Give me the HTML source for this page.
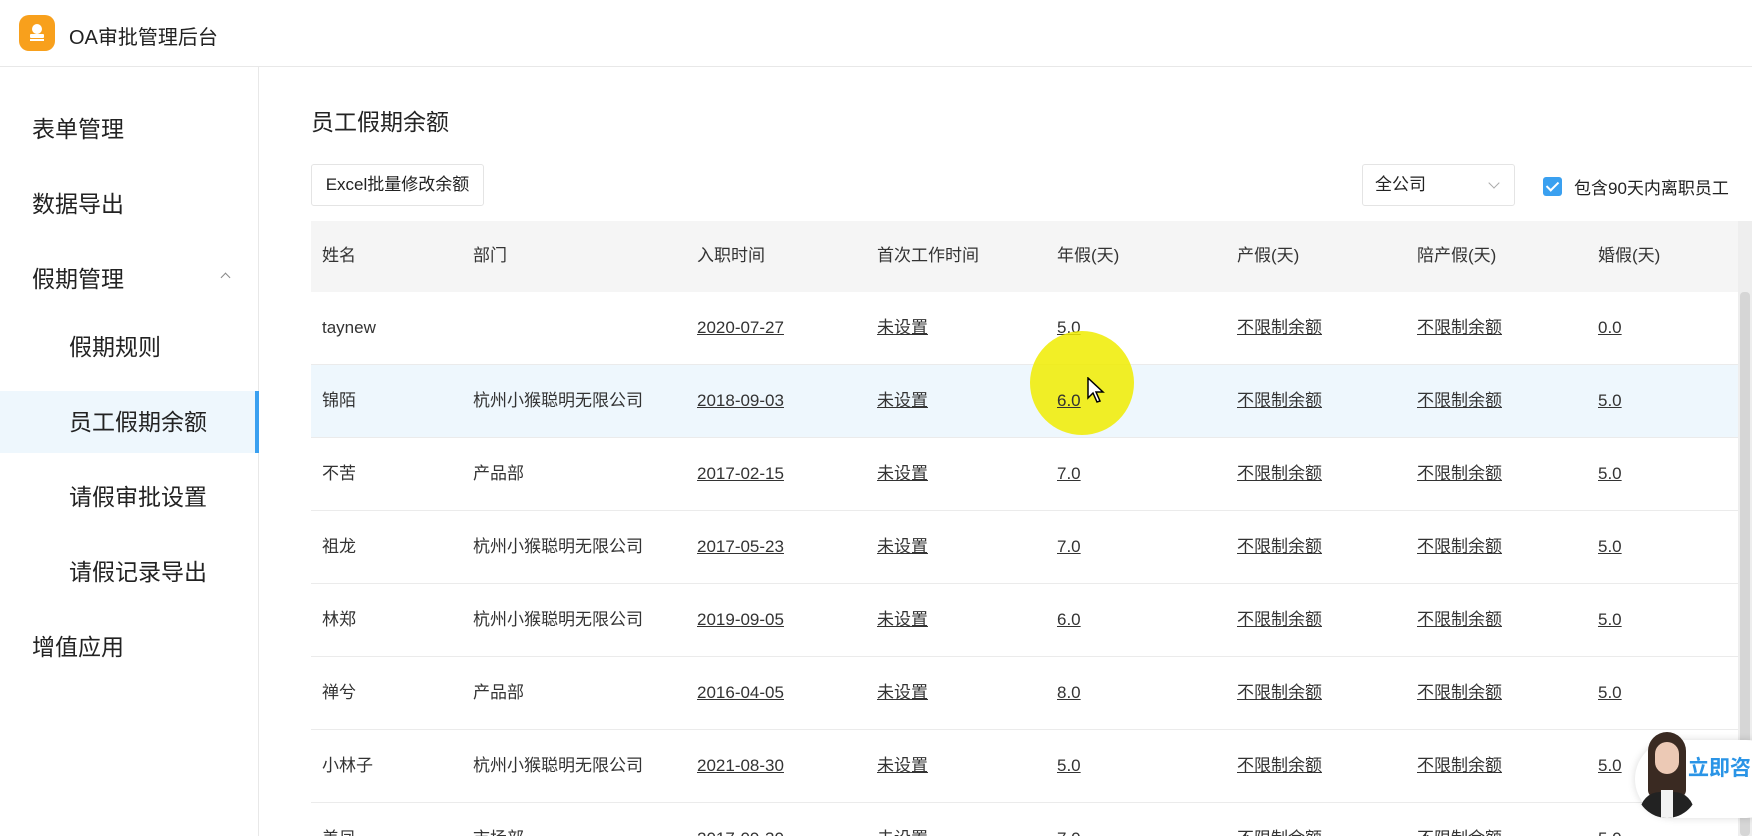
<!DOCTYPE html>
<html><head><meta charset="utf-8"><style>
*{margin:0;padding:0;box-sizing:border-box}
html,body{width:1752px;height:836px;overflow:hidden}
body{background:#fff;font-family:"Liberation Sans","Noto Sans CJK SC",sans-serif;color:#333;position:relative}
.hdr{position:absolute;left:0;top:0;width:1752px;height:67px;border-bottom:1px solid #e8e8e8;background:#fff}
.logo{position:absolute;left:19px;top:15px;width:36px;height:36px;border-radius:10px;background:#f8a01c}
.hdr .t{position:absolute;left:69px;top:21px;font-size:20px;color:#222}
.side{position:absolute;left:0;top:67px;width:259px;height:769px;border-right:1px solid #e8e8e8}
.si{position:absolute;font-size:23px;color:#222;line-height:30px}
.act{position:absolute;left:0;top:391px;width:259px;height:62px;background:#eef7fd;border-right:4px solid #3aa0f0}
.tt{position:absolute;left:311px;top:103px;font-size:23px;color:#222}
.btn{position:absolute;left:311px;top:164px;width:173px;height:42px;border:1px solid #e4e4e4;border-radius:3px;font-size:17px;line-height:40px;text-align:center;color:#222}
.sel{position:absolute;left:1362px;top:164px;width:153px;height:42px;border:1px solid #e4e4e4;border-radius:3px;font-size:17px;line-height:40px;padding-left:12px;color:#222}
.sel:after{content:"";position:absolute;right:16px;top:14px;width:7px;height:7px;border-right:1px solid #aaa;border-bottom:1px solid #aaa;transform:rotate(45deg)}
.cb{position:absolute;left:1543px;top:177px;width:19px;height:19px;background:#3aa0f0;border-radius:3px}
.cb:after{content:"";position:absolute;left:6px;top:2px;width:5px;height:10px;border-right:2.5px solid #fff;border-bottom:2.5px solid #fff;transform:rotate(45deg)}
.cbt{position:absolute;left:1574px;top:174px;font-size:17px;color:#222}
.th{position:absolute;left:311px;top:221px;width:1427px;height:71px;background:#f5f5f5}
.row{position:absolute;left:311px;width:1427px;height:73px;border-bottom:1px solid #ebebeb}
.c{position:absolute;font-size:17px;line-height:20px;color:#333;white-space:nowrap}
.u{text-decoration:underline}
.sb{position:absolute;left:1738px;top:221px;width:14px;height:615px;background:#eee}
.sbt{position:absolute;left:1740px;top:292px;width:10px;height:544px;background:#d6d6d6;border-radius:4px}
</style></head><body>
<div class="hdr"><div class="logo"><svg width="36" height="36" viewBox="0 0 36 36"><circle cx="18" cy="14" r="5" fill="#fff"/><rect x="11" y="19" width="14" height="4" rx="1" fill="#fff"/><rect x="11" y="24" width="14" height="2" fill="#fff"/></svg></div><div class="t">OA审批管理后台</div></div>
<div class="side">
<div class="act" style="top:324px"></div>
</div>
<div class="si" style="left:32px;top:114px">表单管理</div>
<div class="si" style="left:32px;top:189px">数据导出</div>
<div class="si" style="left:32px;top:264px">假期管理</div>
<div style="position:absolute;left:222px;top:274px;width:7px;height:7px;border-left:1px solid #888;border-top:1px solid #888;transform:rotate(45deg)"></div>
<div class="si" style="left:69px;top:332px">假期规则</div>
<div class="si" style="left:69px;top:407px">员工假期余额</div>
<div class="si" style="left:69px;top:482px">请假审批设置</div>
<div class="si" style="left:69px;top:557px">请假记录导出</div>
<div class="si" style="left:32px;top:632px">增值应用</div>
<div class="tt">员工假期余额</div>
<div class="btn">Excel批量修改余额</div>
<div class="sel">全公司</div>
<div class="cb"></div><div class="cbt">包含90天内离职员工</div>
<div class="th">
<div class="c" style="left:11px;top:25px">姓名</div><div class="c" style="left:162px;top:25px">部门</div><div class="c" style="left:386px;top:25px">入职时间</div><div class="c" style="left:566px;top:25px">首次工作时间</div><div class="c" style="left:746px;top:25px">年假(天)</div><div class="c" style="left:926px;top:25px">产假(天)</div><div class="c" style="left:1106px;top:25px">陪产假(天)</div><div class="c" style="left:1287px;top:25px">婚假(天)</div>
</div>
<div class="row" style="top:292px"><div class="c" style="left:11px;top:26px">taynew</div><div class="c u" style="left:386px;top:26px">2020-07-27</div><div class="c u" style="left:566px;top:26px">未设置</div><div class="c u" style="left:746px;top:26px">5.0</div><div class="c u" style="left:926px;top:26px">不限制余额</div><div class="c u" style="left:1106px;top:26px">不限制余额</div><div class="c u" style="left:1287px;top:26px">0.0</div></div>
<div class="row" style="top:365px;background:#eef7fd"><div class="c" style="left:11px;top:26px">锦陌</div><div class="c" style="left:162px;top:26px">杭州小猴聪明无限公司</div><div class="c u" style="left:386px;top:26px">2018-09-03</div><div class="c u" style="left:566px;top:26px">未设置</div><div class="c u" style="left:746px;top:26px">6.0</div><div class="c u" style="left:926px;top:26px">不限制余额</div><div class="c u" style="left:1106px;top:26px">不限制余额</div><div class="c u" style="left:1287px;top:26px">5.0</div></div>
<div class="row" style="top:438px"><div class="c" style="left:11px;top:26px">不苦</div><div class="c" style="left:162px;top:26px">产品部</div><div class="c u" style="left:386px;top:26px">2017-02-15</div><div class="c u" style="left:566px;top:26px">未设置</div><div class="c u" style="left:746px;top:26px">7.0</div><div class="c u" style="left:926px;top:26px">不限制余额</div><div class="c u" style="left:1106px;top:26px">不限制余额</div><div class="c u" style="left:1287px;top:26px">5.0</div></div>
<div class="row" style="top:511px"><div class="c" style="left:11px;top:26px">祖龙</div><div class="c" style="left:162px;top:26px">杭州小猴聪明无限公司</div><div class="c u" style="left:386px;top:26px">2017-05-23</div><div class="c u" style="left:566px;top:26px">未设置</div><div class="c u" style="left:746px;top:26px">7.0</div><div class="c u" style="left:926px;top:26px">不限制余额</div><div class="c u" style="left:1106px;top:26px">不限制余额</div><div class="c u" style="left:1287px;top:26px">5.0</div></div>
<div class="row" style="top:584px"><div class="c" style="left:11px;top:26px">林郑</div><div class="c" style="left:162px;top:26px">杭州小猴聪明无限公司</div><div class="c u" style="left:386px;top:26px">2019-09-05</div><div class="c u" style="left:566px;top:26px">未设置</div><div class="c u" style="left:746px;top:26px">6.0</div><div class="c u" style="left:926px;top:26px">不限制余额</div><div class="c u" style="left:1106px;top:26px">不限制余额</div><div class="c u" style="left:1287px;top:26px">5.0</div></div>
<div class="row" style="top:657px"><div class="c" style="left:11px;top:26px">禅兮</div><div class="c" style="left:162px;top:26px">产品部</div><div class="c u" style="left:386px;top:26px">2016-04-05</div><div class="c u" style="left:566px;top:26px">未设置</div><div class="c u" style="left:746px;top:26px">8.0</div><div class="c u" style="left:926px;top:26px">不限制余额</div><div class="c u" style="left:1106px;top:26px">不限制余额</div><div class="c u" style="left:1287px;top:26px">5.0</div></div>
<div class="row" style="top:730px"><div class="c" style="left:11px;top:26px">小林子</div><div class="c" style="left:162px;top:26px">杭州小猴聪明无限公司</div><div class="c u" style="left:386px;top:26px">2021-08-30</div><div class="c u" style="left:566px;top:26px">未设置</div><div class="c u" style="left:746px;top:26px">5.0</div><div class="c u" style="left:926px;top:26px">不限制余额</div><div class="c u" style="left:1106px;top:26px">不限制余额</div><div class="c u" style="left:1287px;top:26px">5.0</div></div>
<div class="row" style="top:803px"><div class="c" style="left:11px;top:26px">美凤</div><div class="c" style="left:162px;top:26px">市场部</div><div class="c u" style="left:386px;top:26px">2017-09-30</div><div class="c u" style="left:566px;top:26px">未设置</div><div class="c u" style="left:746px;top:26px">7.0</div><div class="c u" style="left:926px;top:26px">不限制余额</div><div class="c u" style="left:1106px;top:26px">不限制余额</div><div class="c u" style="left:1287px;top:26px">5.0</div></div>
<div class="sb"></div><div class="sbt"></div>
<div style="position:absolute;left:1030px;top:331px;width:104px;height:104px;border-radius:50%;background:rgba(240,236,0,0.85)"></div>
<div class="c u" style="left:1057px;top:391px">6.0</div>
<svg style="position:absolute;left:1087px;top:377px" width="20" height="28" viewBox="0 0 20 28"><path d="M1 1 L1 21 L6 16 L10 25 L13 24 L9 15 L16 15 Z" fill="#fff" stroke="#000" stroke-width="1.5"/></svg>
<div style="position:absolute;left:1635px;top:740px;width:150px;height:78px;border-radius:39px;background:#fff;box-shadow:0 0 8px rgba(0,0,0,0.15)"></div>
<div style="position:absolute;left:1636px;top:730px;width:62px;height:88px;border-radius:0 0 31px 31px;overflow:hidden"><div style="position:absolute;left:12px;top:2px;width:38px;height:66px;border-radius:19px 19px 8px 8px;background:#3a2a22"></div><div style="position:absolute;left:19px;top:12px;width:24px;height:32px;border-radius:12px;background:#ecc9b5"></div><div style="position:absolute;left:4px;top:62px;width:54px;height:30px;border-radius:20px 20px 0 0;background:#222"></div><div style="position:absolute;left:25px;top:60px;width:12px;height:30px;background:#f2f2f2"></div></div>
<div style="position:absolute;left:1688px;top:752px;font-size:21px;font-weight:bold;color:#2a94e6;white-space:nowrap">立即咨</div>
</body></html>
